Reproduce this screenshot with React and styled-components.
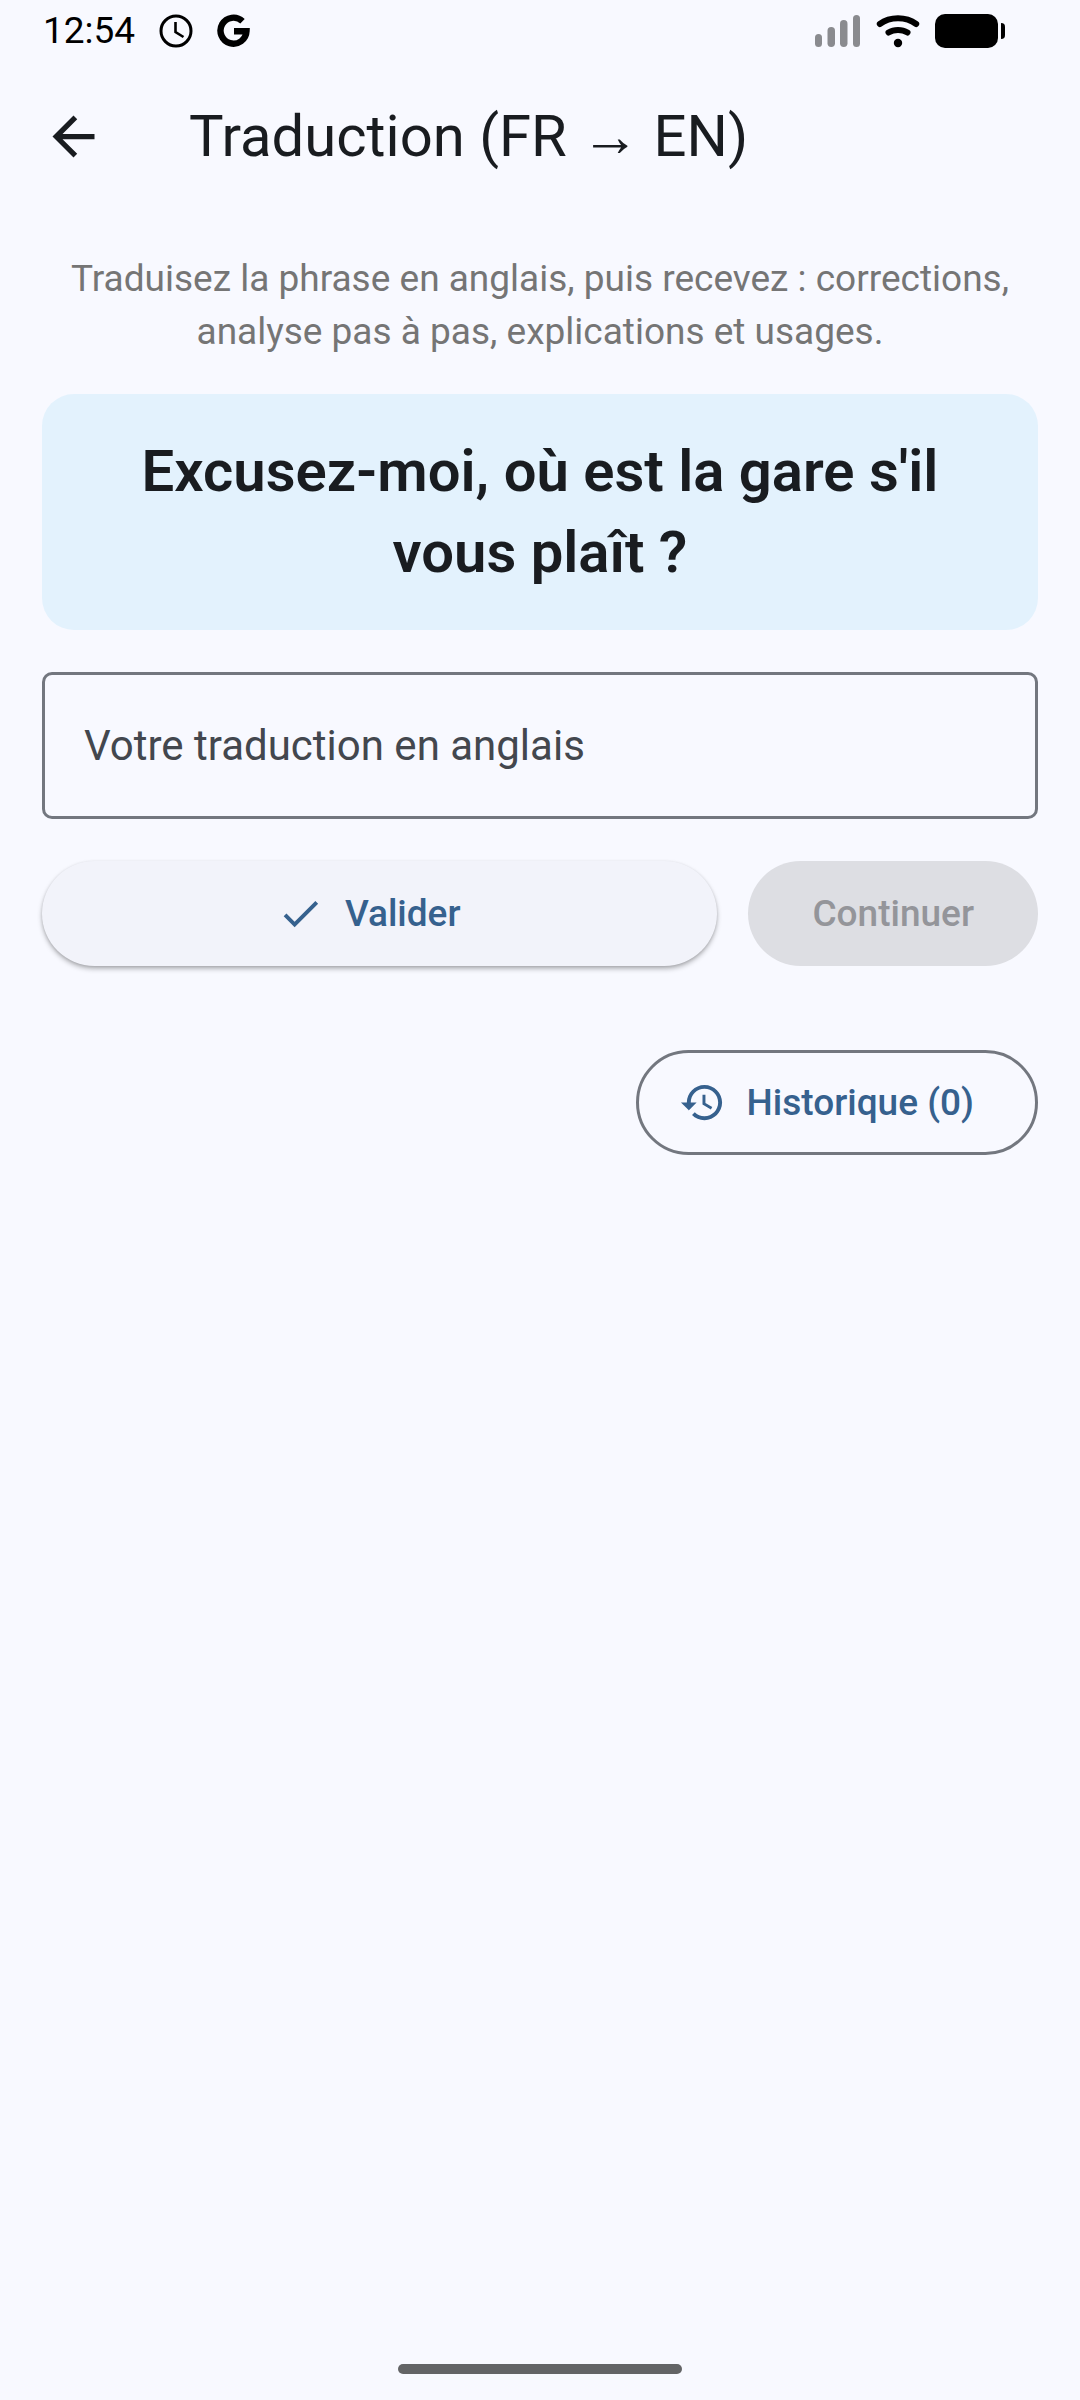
import React, { useState } from "react";
import styled, { createGlobalStyle } from "styled-components";

const GlobalStyle = createGlobalStyle`
  *, *::before, *::after { box-sizing: border-box; }
  body {
    margin: 0;
    background: #f8f9ff;
    color: #191c20;
    font-family: Roboto, "Noto Sans", "Liberation Sans", sans-serif;
  }
  button, input { font-family: inherit; }
`;

const Screen = styled.div`
  min-height: 100vh;
  display: flex;
  flex-direction: column;
`;

const StatusBar = styled.header`
  height: 62px;
  padding: 0 75px 0 43px;
  display: flex;
  align-items: center;
  justify-content: space-between;
  color: #000;
`;

const StatusGroup = styled.div`
  display: flex;
  align-items: center;
  gap: ${({ $gap }) => $gap}px;
`;

const Time = styled.time`
  font-size: 37px;
  line-height: 60px;
`;

const AppBar = styled.nav`
  height: 148px;
  padding: 0 42px;
  display: flex;
  align-items: center;
  gap: 84px;
`;

const BackButton = styled.button`
  display: flex;
  padding: 0;
  border: 0;
  background: none;
  color: #191c20;
  cursor: pointer;
`;

const Title = styled.h1`
  margin: 0;
  font-size: 58px;
  line-height: 76px;
  font-weight: 400;
`;

const Main = styled.main`
  flex: 1;
  display: flex;
  flex-direction: column;
  padding: 42px;
`;

const Intro = styled.p`
  margin: 0 0 36px;
  font-size: 37px;
  line-height: 53px;
  text-align: center;
  color: #757575;
`;

const PhraseCard = styled.section`
  margin-bottom: 42px;
  padding: 37px 42px;
  border-radius: 32px;
  background: #e3f2fd;
`;

const Phrase = styled.h2`
  margin: 0;
  font-size: 58px;
  line-height: 81px;
  font-weight: 600;
  text-align: center;
`;

const AnswerField = styled.input`
  width: 100%;
  height: 147px;
  margin-bottom: 42px;
  padding: 0 39px;
  border: 3px solid #73777f;
  border-radius: 10px;
  background: transparent;
  color: #191c20;
  font-size: 42px;
  outline: none;
  &::placeholder { color: #43474e; opacity: 1; }
`;

const Actions = styled.div`
  display: flex;
  gap: 31px;
  margin-bottom: 84px;
`;

const Button = styled.button`
  display: flex;
  align-items: center;
  justify-content: center;
  gap: 21px;
  height: 105px;
  padding: 0 64px;
  border: 0;
  border-radius: 53px;
  font-size: 37px;
  line-height: 53px;
  font-weight: 500;
  color: #36618e;
  cursor: pointer;
`;

const SubmitButton = styled(Button)`
  flex: 1;
  padding-left: 42px;
  background: #f2f3fa;
  box-shadow: 0 3px 5px rgba(0, 0, 0, 0.26), 0 1px 3px rgba(0, 0, 0, 0.12);
`;

const NextButton = styled(Button)`
  background: #dddee3;
  color: #94959a;
  cursor: default;
`;

const HistoryButton = styled(Button)`
  align-self: flex-end;
  padding: 0 61px 0 40px;
  border: 3px solid #73777f;
  background: transparent;
`;

const GestureArea = styled.footer`
  display: flex;
  justify-content: center;
  padding-bottom: 26px;
`;

const GestureHandle = styled.div`
  width: 284px;
  height: 10px;
  border-radius: 5px;
  background: #636466;
`;

const Icon = ({ size, d }) => (
  <svg width={size} height={size} viewBox="0 0 24 24" fill="currentColor" aria-hidden="true">
    <path d={d} />
  </svg>
);

const ARROW_BACK = "M20 11H7.83l5.59-5.59L12 4l-8 8 8 8 1.41-1.41L7.83 13H20v-2z";
const CHECK = "M9 16.17 4.83 12l-1.42 1.41L9 19 21 7l-1.41-1.41z";
const HISTORY =
  "M13 3c-4.97 0-9 4.03-9 9H1l3.89 3.89.07.14L9 12H6c0-3.87 3.13-7 7-7s7 3.13 7 7-3.13 7-7 7c-1.93 0-3.68-.79-4.94-2.06l-1.42 1.42C8.27 19.99 10.51 21 13 21c4.97 0 9-4.03 9-9s-4.03-9-9-9zm-1 5v5l4.28 2.54.72-1.21-3.5-2.08V8H12z";

const ClockIcon = () => (
  <svg width="34" height="34" viewBox="0 0 34 34" fill="none" stroke="currentColor" strokeWidth="3" aria-hidden="true">
    <circle cx="17" cy="17" r="15" />
    <path d="M16.500 8v10l8 5" strokeWidth="2.600" />
  </svg>
);

const GoogleIcon = () => (
  <svg width="34" height="34" viewBox="0 0 34 34" fill="none" stroke="currentColor" strokeWidth="6.400" aria-hidden="true">
    <path d="M25.500 7.300A13 13 0 1 0 29.500 17.200H17" />
  </svg>
);

const SignalIcon = () => (
  <svg width="46" height="34" viewBox="0 0 46 34" fill="#8a8b8f" aria-hidden="true">
    <rect x="0" y="20" width="7" height="13" rx="3.500" />
    <rect x="12.500" y="13" width="7.500" height="20" rx="3.700" />
    <rect x="25" y="6" width="7.500" height="27" rx="3.700" />
    <rect x="38" y="1" width="7" height="32" rx="3.500" />
  </svg>
);

const WifiIcon = () => (
  <svg width="44" height="34" viewBox="0 0 44 34" fill="none" stroke="currentColor" strokeLinecap="round" aria-hidden="true">
    <path d="M3.800 10C14 2.300 30 2.300 40.200 10" strokeWidth="6" />
    <path d="M12.500 18.500C18 15 26 15 31.500 18.500" strokeWidth="6" />
    <circle cx="22" cy="29" r="4.200" fill="currentColor" stroke="none" />
  </svg>
);

const BatteryIcon = () => (
  <svg width="70" height="34" viewBox="0 0 70 34" fill="currentColor" aria-hidden="true">
    <rect width="63" height="34" rx="10" />
    <path d="M66 9c3 0 4 1.500 4 4v8c0 2.500-1 4-4 4z" />
  </svg>
);

export default function App() {
  const [answer, setAnswer] = useState("");
  return (
    <>
      <GlobalStyle />
      <Screen>
        <StatusBar>
          <StatusGroup $gap={24}>
            <Time>12:54</Time>
            <ClockIcon />
            <GoogleIcon />
          </StatusGroup>
          <StatusGroup $gap={15}>
            <SignalIcon />
            <WifiIcon />
            <BatteryIcon />
          </StatusGroup>
        </StatusBar>
        <AppBar>
          <BackButton type="button" aria-label="Retour">
            <Icon size={63} d={ARROW_BACK} />
          </BackButton>
          <Title>Traduction (FR → EN)</Title>
        </AppBar>
        <Main>
          <Intro>
            Traduisez la phrase en anglais, puis recevez : corrections, analyse pas à pas, explications et usages.
          </Intro>
          <PhraseCard>
            <Phrase>Excusez-moi, où est la gare s'il vous plaît ?</Phrase>
          </PhraseCard>
          <AnswerField
            type="text"
            aria-label="Votre traduction en anglais"
            placeholder="Votre traduction en anglais"
            value={answer}
            onChange={(event) => setAnswer(event.target.value)}
          />
          <Actions>
            <SubmitButton type="button">
              <Icon size={47} d={CHECK} />
              Valider
            </SubmitButton>
            <NextButton type="button" disabled>
              Continuer
            </NextButton>
          </Actions>
          <HistoryButton type="button">
            <Icon size={47} d={HISTORY} />
            Historique (0)
          </HistoryButton>
        </Main>
        <GestureArea>
          <GestureHandle />
        </GestureArea>
      </Screen>
    </>
  );
}
